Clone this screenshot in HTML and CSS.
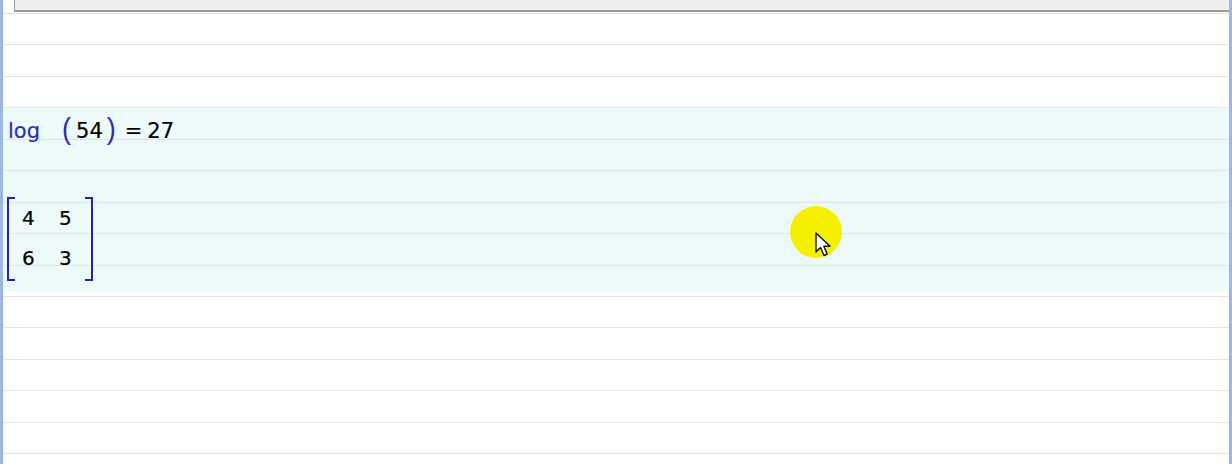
FILE: index.html
```html
<!DOCTYPE html>
<html>
<head>
<meta charset="utf-8">
<link rel="stylesheet" href="styles.css">
</head>
<body>
<div class="frame">
  <div class="topbar"></div>
  <div class="block">
    <div class="formula">
      <span class="fn">log</span>
      <span class="paren lp">(</span>
      <span class="num">54</span>
      <span class="paren rp">)</span>
      <span class="eq">=</span>
      <span class="num">27</span>
    </div>
    <div class="matrix">
      <div class="brk brk-l"></div>
      <div class="cells">
        <span>4</span><span>5</span>
        <span>6</span><span>3</span>
      </div>
      <div class="brk brk-r"></div>
    </div>
  </div>
  <div class="below"></div>
  <div class="pointer">
    <svg class="arrow" width="18" height="26" viewBox="0 0 18 26">
      <path d="M1 1 L1 20 L5.5 15.5 L9 23.5 L12.2 22.1 L8.8 14.3 L15 14.3 Z" fill="#fff" stroke="#111" stroke-width="1.4" stroke-linejoin="round"/>
    </svg>
  </div>
</div>
</body>
</html>
```
FILE: styles.css
```css
html, body {
  margin: 0;
  padding: 0;
  background: #ffffff;
}
.frame {
  position: relative;
  box-sizing: border-box;
  width: 1232px;
  height: 464px;
  border-left: 3px solid #9db7e2;
  border-right: 3px solid #9db7e2;
  overflow: hidden;
  background-color: #ffffff;
  background-image: repeating-linear-gradient(to bottom,
    transparent 0, transparent 13px,
    #e2e2e2 13px, #e2e2e2 14px,
    transparent 14px, transparent 44px,
    #e2e2e2 44px, #e2e2e2 45px,
    transparent 45px, transparent 63px);
}
.topbar {
  margin-left: 11px;
  height: 10px;
  background: #efefef;
  border-left: 1px solid #9a9a9a;
  border-bottom: 2px solid #9a9a9a;
}
.block {
  margin-top: 95px;
  height: 185px;
  background: rgba(205, 242, 242, 0.35);
  padding-left: 4px;
  box-sizing: border-box;
  font-family: "DejaVu Sans", sans-serif;
  color: #000;
}
.below {
  height: 172px;
  background-color: #ffffff;
  background-image: repeating-linear-gradient(to bottom,
    transparent 0, transparent 4px,
    #e2e2e2 4px, #e2e2e2 5px,
    transparent 5px, transparent 35px,
    #e2e2e2 35px, #e2e2e2 36px,
    transparent 36px, transparent 63px);
}
.formula {
  display: flex;
  align-items: baseline;
  height: 40px;
  padding-top: 7px;
  box-sizing: border-box;
  font-size: 21px;
  -webkit-text-stroke: 0.2px currentColor;
}
.fn {
  color: #2b2bb0;
  margin-left: 1px;
}
.paren {
  color: #2b2bb0;
  font-family: "Liberation Sans", sans-serif;
  font-size: 27px;
  display: inline-block;
  transform: scaleY(1.08);
  -webkit-text-stroke: 0;
}
.lp { margin-left: 22px; margin-right: 5px; }
.rp { margin-left: 4px; margin-right: 9px; }
.eq { margin-right: 5px; }
.matrix {
  display: flex;
  margin-top: 50px;
  height: 84px;
  margin-left: 0;
}
.brk {
  width: 6px;
  border-top: 2px solid #2323a8;
  border-bottom: 2px solid #2323a8;
}
.brk-l { border-left: 2px solid #2323a8; }
.brk-r { border-right: 2px solid #2323a8; }
.cells {
  display: grid;
  grid-template-columns: 37px 26px;
  grid-template-rows: 40px 40px;
  padding-left: 7px;
  padding-top: 1px;
  font-size: 20px;
  line-height: 40px;
  width: 63px;
  -webkit-text-stroke: 0.2px currentColor;
}
.pointer {
  position: absolute;
  left: 787px;
  top: 206px;
  width: 52px;
  height: 52px;
  border-radius: 50%;
  background: #f4f000;
}
.arrow {
  position: absolute;
  left: 25px;
  top: 26px;
}
```
